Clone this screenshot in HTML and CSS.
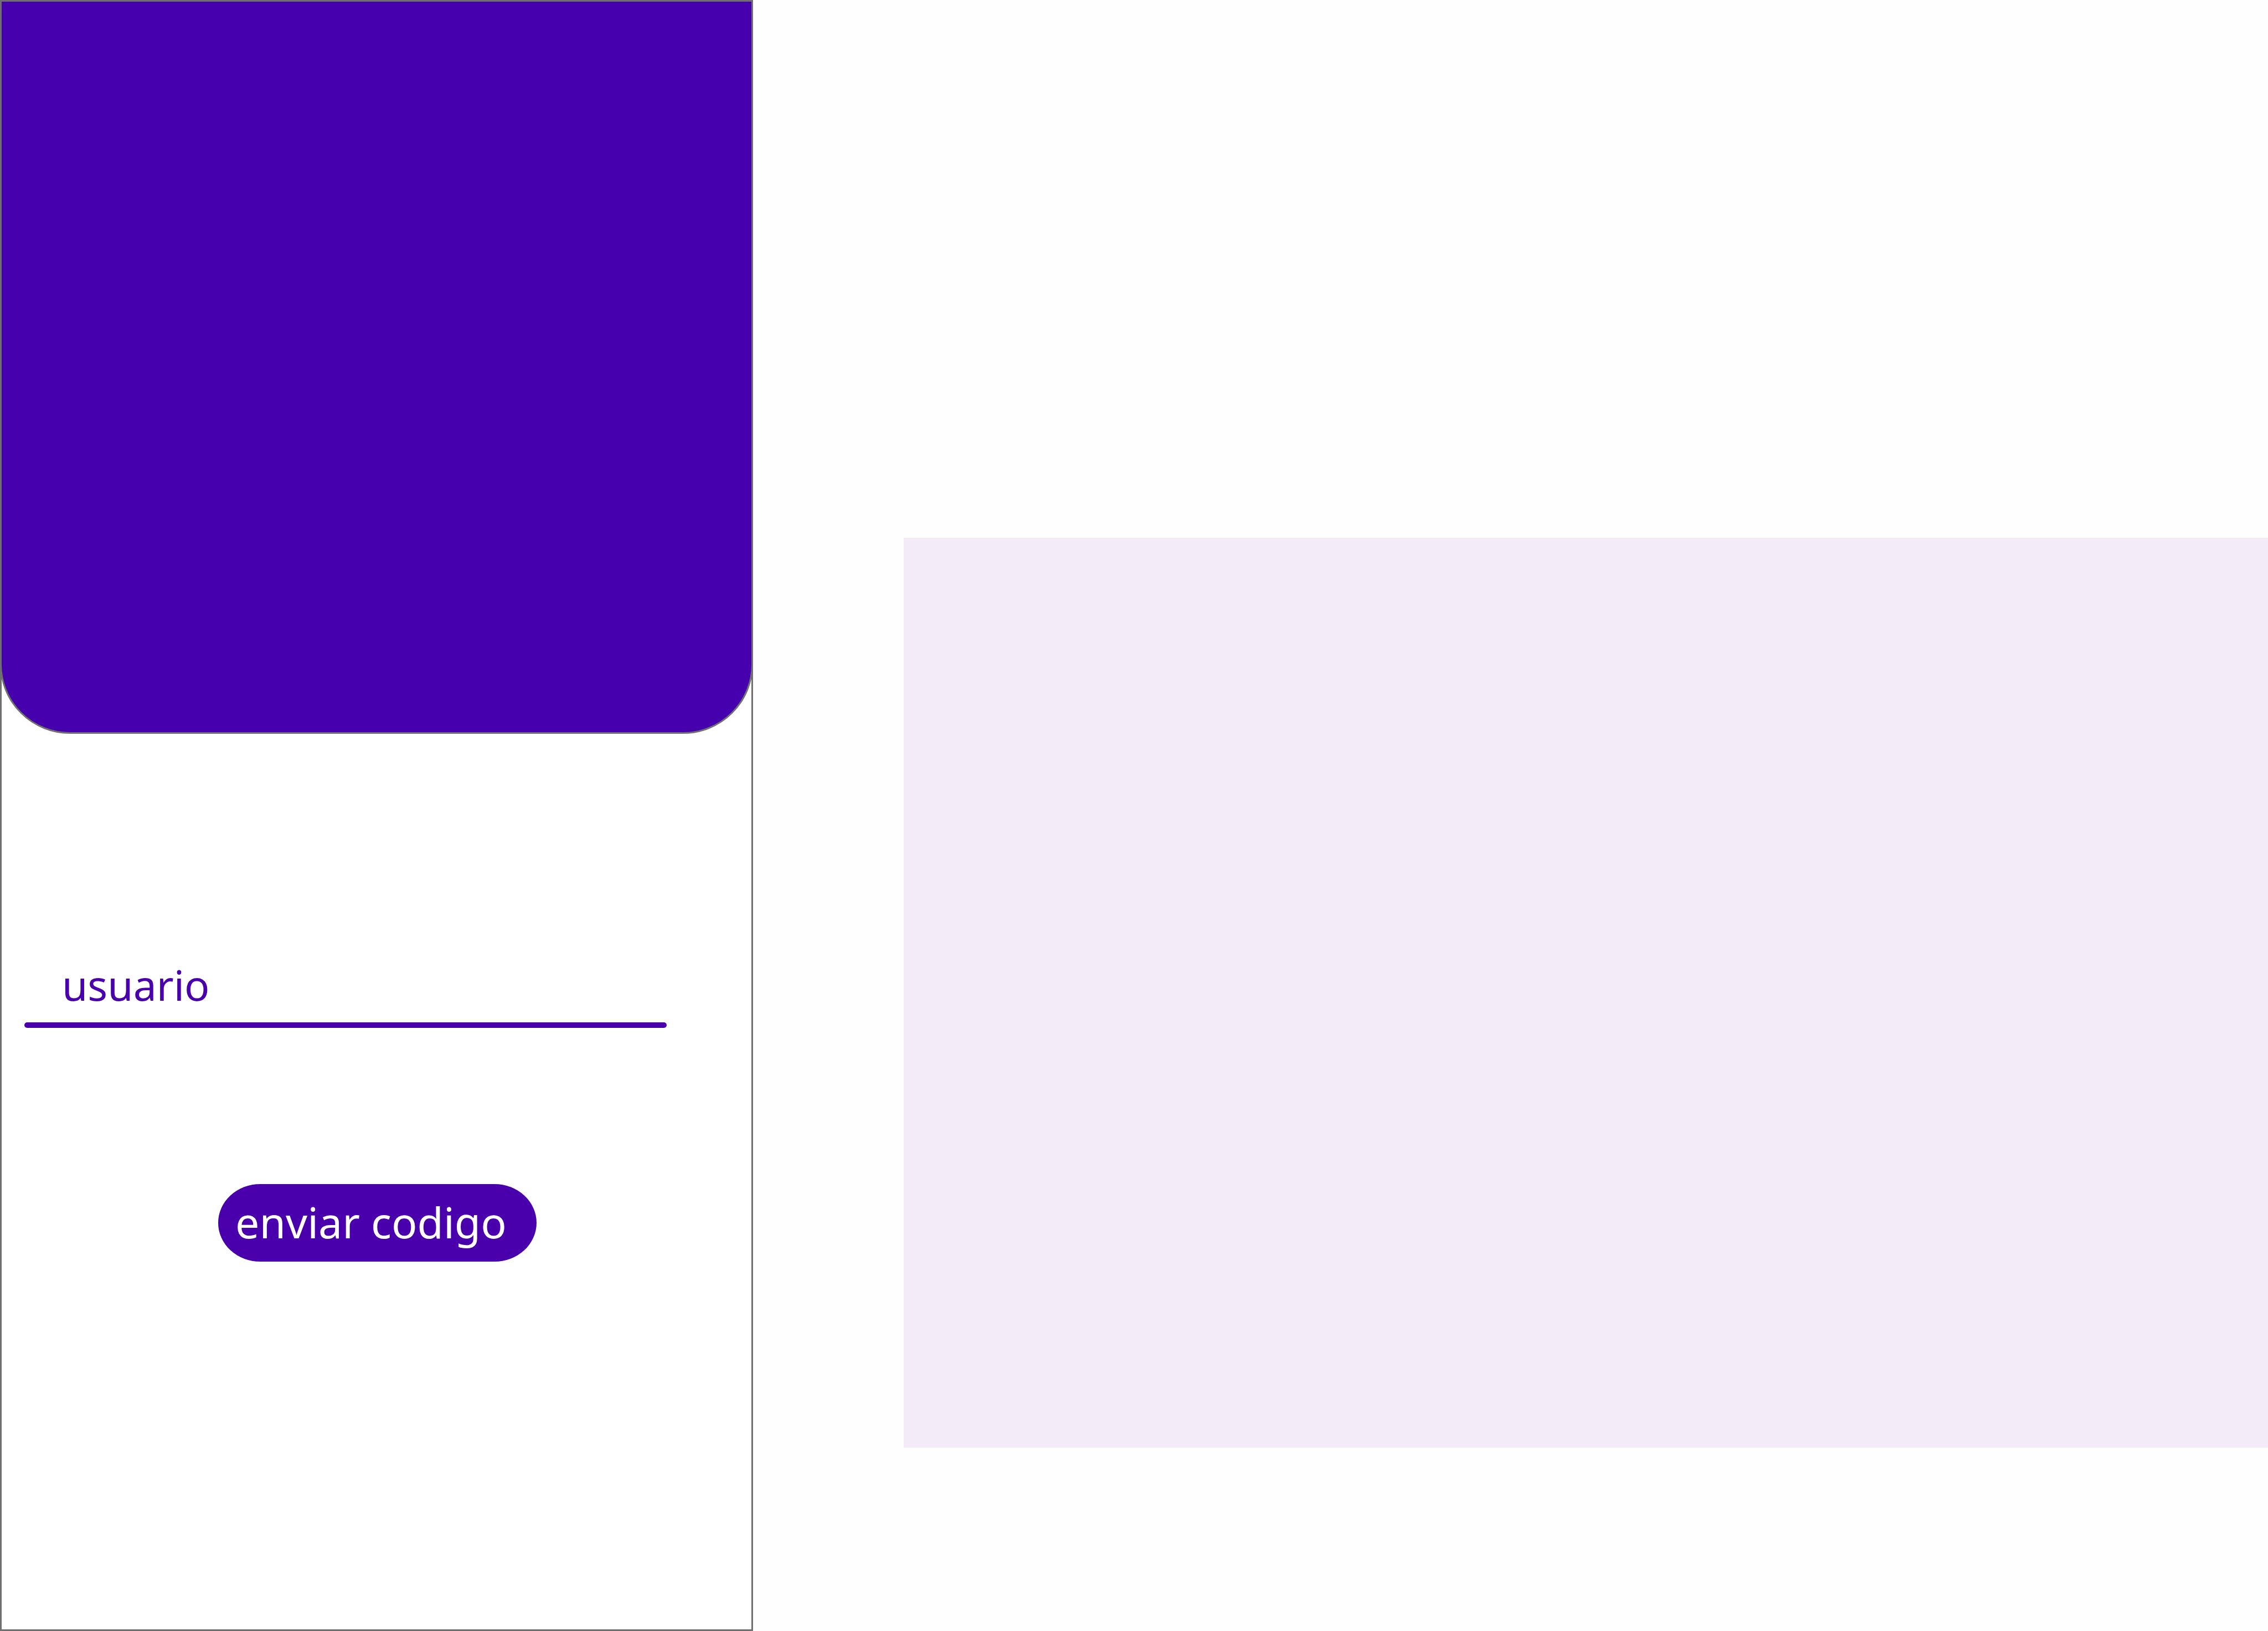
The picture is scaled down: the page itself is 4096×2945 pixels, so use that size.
FILE: index.html
```html
<!DOCTYPE html>
<html lang="es">
<head>
  <meta charset="utf-8">
  <meta name="viewport" content="width=device-width, initial-scale=1">
  <title>Enviar codigo</title>
  <link rel="stylesheet" href="styles.css">
</head>
<body>
  <div class="board">
    <main class="phone">
      <header class="hero"></header>
      <form class="form">
        <div class="field">
          <input class="field-input" type="text" name="usuario" placeholder="usuario" aria-label="usuario">
        </div>
        <button class="submit" type="button">enviar codigo</button>
      </form>
    </main>
    <aside class="panel"></aside>
  </div>
</body>
</html>
```
FILE: styles.css
```css
* {
  box-sizing: border-box;
}

body {
  margin: 0;
  background: #fefefe;
  font-family: "Noto Sans", sans-serif;
}

.board {
  display: grid;
  grid-template-columns: 1360fr 2736fr;
  align-items: start;
  min-height: 100vh;
}

.phone {
  align-self: stretch;
  background: #fff;
  border: 3px solid #707070;
}

.hero {
  height: 1325px;
  margin: -3px -3px 0;
  background: #4600ad;
  border: 3px solid #707070;
  border-radius: 0 0 126px 126px;
}

.form {
  display: flex;
  flex-direction: column;
  padding: 401px 153px 0 41px;
}

.field {
  display: flex;
  flex-direction: column;
  gap: 16px;
}

/* rounded rule under the text box */
.field::after {
  content: "";
  height: 10px;
  border-radius: 5px;
  background: #4900ac;
}

.field-input {
  width: 100%;
  height: 104px;
  padding: 0 68px;
  border: 0;
  outline: 0;
  background: transparent;
  color: #4900ac;
  font: inherit;
  font-size: 75px;
  line-height: 104px;
}

.field-input::placeholder {
  color: #4900ac;
  opacity: 1;
}

.submit {
  align-self: flex-start;
  width: 575px;
  height: 140px;
  margin: 282px 0 0 350px;
  padding: 0 0 2px 31px;
  border: 0;
  border-radius: 76px / 70px;
  background: #4900ac;
  color: #fff;
  font: inherit;
  font-size: 77px;
  line-height: 104px;
  text-align: left;
  white-space: nowrap;
}

.panel {
  height: 1643px;
  margin: 971px 0 0 272px;
  background: #f4ebf9;
}
```
